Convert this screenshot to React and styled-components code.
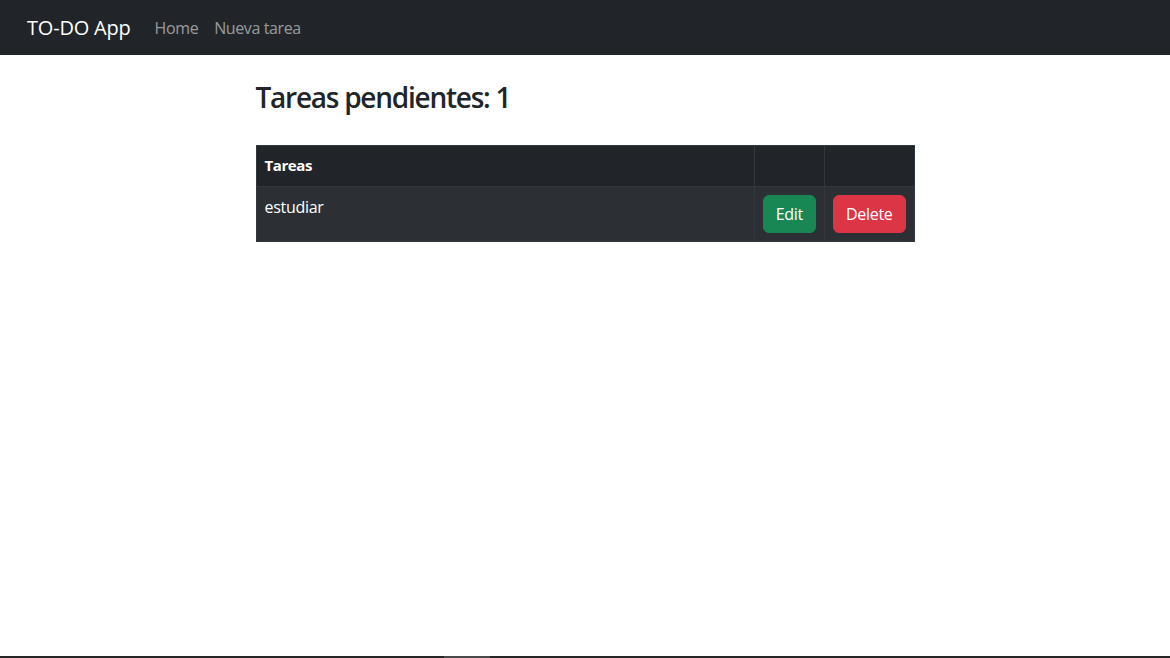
import React from "react";
import styled, { createGlobalStyle } from "styled-components";

const Global = createGlobalStyle`
  * { box-sizing: border-box; }
  html, body { margin: 0; padding: 0; }
  body {
    font-family: "Open Sans", "Noto Sans", "Liberation Sans", sans-serif;
    font-size: 16px;
    line-height: 1.5;
    color: #212529;
    background: #fff;
  }
`;

const Page = styled.div`
  min-height: 658px;
  display: flex;
  flex-direction: column;
`;

const Navbar = styled.nav`
  height: 55px;
  background: #212529;
  display: flex;
  align-items: center;
  padding: 0 27px;
`;

const Brand = styled.a`
  color: #fff;
  font-size: 20px;
  margin-right: 16px;
  text-decoration: none;
  letter-spacing: -0.2px;
`;

const NavLinks = styled.div`
  display: flex;
`;

const NavLink = styled.a`
  color: rgba(255, 255, 255, 0.55);
  font-size: 16px;
  padding: 0 8px;
  text-decoration: none;
  letter-spacing: -0.4px;
`;

const Main = styled.main`
  flex: 1;
  width: 659px;
  margin: 0 auto;
  padding-top: 26px;
`;

const Title = styled.h3`
  margin: 0 0 30px;
  font-size: 28px;
  font-weight: 600;
  line-height: 1.2;
  letter-spacing: -1.25px;
`;

const Table = styled.table`
  width: 100%;
  border-collapse: collapse;
  color: #fff;
  background: #212529;
`;

const Row = styled.tr`
  background: ${(p) => (p.$striped ? "#2c3034" : "#212529")};
`;

const Th = styled.th`
  text-align: left;
  font-weight: 700;
  padding: 8px;
  border: 1px solid #32383e;
  width: ${(p) => p.$w || "auto"};
  font-size: 15px;
  letter-spacing: -0.4px;
  height: 41px;
`;

const Td = styled.td`
  padding: 8px;
  border: 1px solid #32383e;
  vertical-align: top;
  letter-spacing: -0.3px;
  height: 55px;
`;

const Button = styled.button`
  font-family: inherit;
  font-size: 16px;
  line-height: 1.5;
  padding: 6px 12px;
  border-radius: 6px;
  border: 1px solid ${(p) => p.$bg};
  background: ${(p) => p.$bg};
  color: #fff;
  cursor: pointer;
  letter-spacing: -0.3px;
  display: block;
`;

const BottomBar = styled.div`
  height: 2px;
  background: #262626;
  display: flex;
`;

const BarThumb = styled.div`
  margin-left: 444px;
  width: 46px;
  background: #4a4a4a;
`;

export default function App() {
  return (
    <Page>
      <Global />
      <Navbar>
        <Brand href="#">TO-DO App</Brand>
        <NavLinks>
          <NavLink href="#">Home</NavLink>
          <NavLink href="#">Nueva tarea</NavLink>
        </NavLinks>
      </Navbar>
      <Main>
        <Title>Tareas pendientes: 1</Title>
        <Table>
          <thead>
            <Row>
              <Th>Tareas</Th>
              <Th $w="68px"></Th>
              <Th $w="89px"></Th>
            </Row>
          </thead>
          <tbody>
            <Row $striped>
              <Td>estudiar</Td>
              <Td>
                <Button $bg="#198754">Edit</Button>
              </Td>
              <Td>
                <Button $bg="#dc3545">Delete</Button>
              </Td>
            </Row>
          </tbody>
        </Table>
      </Main>
      <BottomBar>
        <BarThumb />
      </BottomBar>
    </Page>
  );
}
